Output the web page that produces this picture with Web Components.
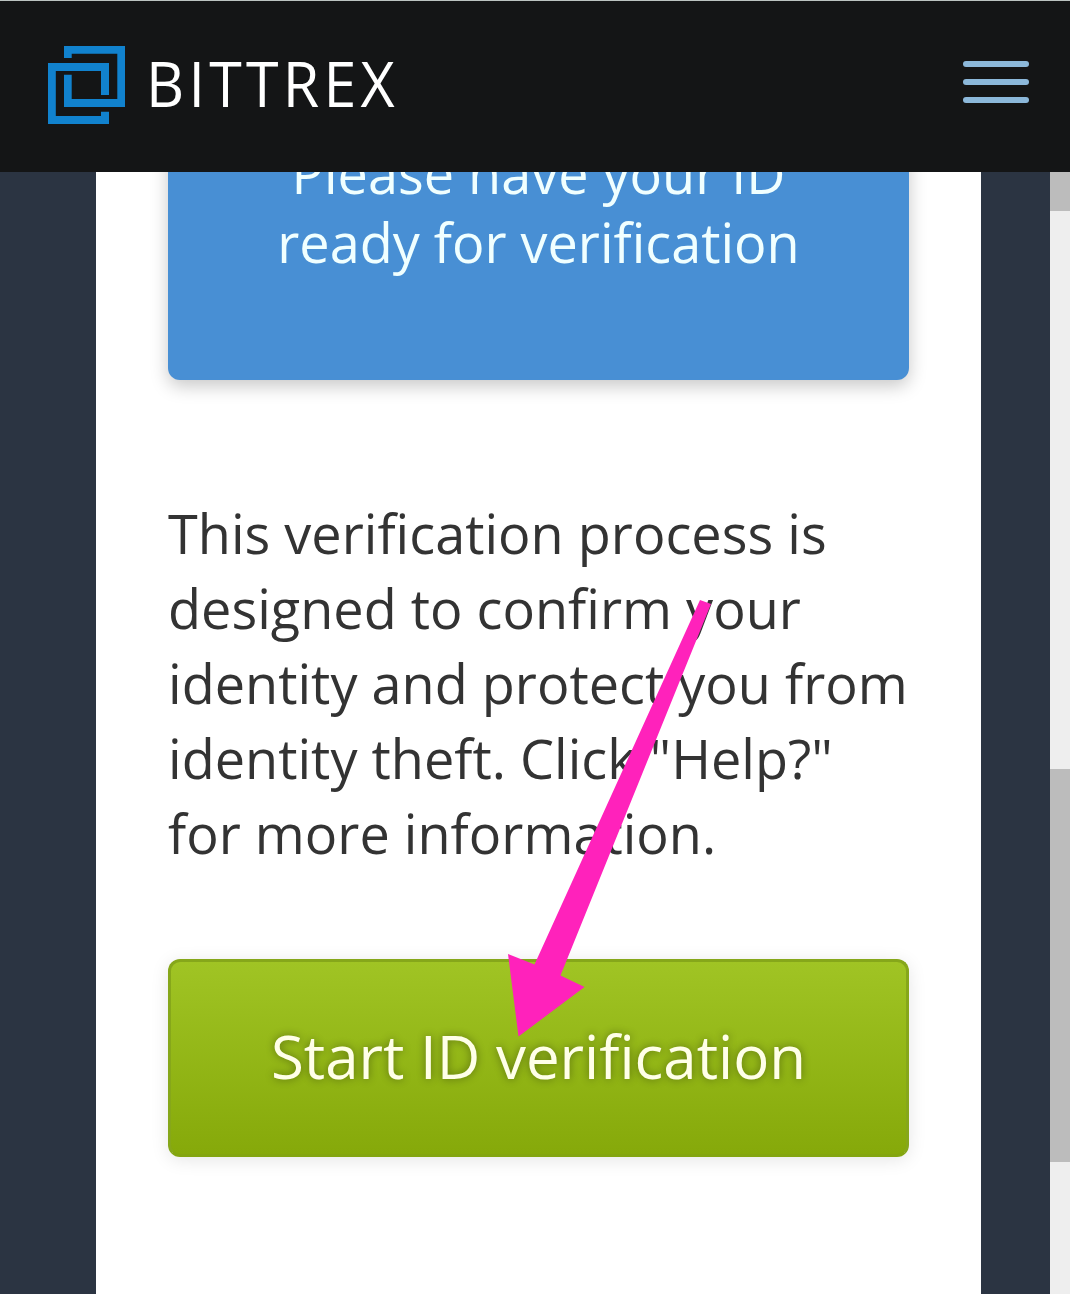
<!DOCTYPE html>
<html lang="en">
<head>
<meta charset="utf-8">
<title>Bittrex - ID verification</title>
<style>
html, body { margin: 0; height: 100%; overflow: hidden; }
body { font-family: "Open Sans", "Noto Sans", sans-serif; background: #2b3442; font-variant-ligatures: none; }
</style>
</head>
<body>
<verify-page>
  <site-header slot="header"><brand-logo>BITTREX</brand-logo><menu-button></menu-button></site-header>
  <notice-card>Please have your ID ready for verification</notice-card>
  <info-text>This verification process is designed to confirm your identity and protect you from identity theft. Click "Help?" for more information.</info-text>
  <action-button>Start ID verification</action-button>
  <scroll-track slot="scroll"></scroll-track>
  <pointer-arrow slot="overlay"></pointer-arrow>
</verify-page>
<script>
const define = (name, html) => customElements.define(name, class extends HTMLElement {
  constructor() {
    super();
    this.attachShadow({ mode: 'open' }).innerHTML = html;
  }
});

define('verify-page', `
<style>
:host { display: flex; flex-direction: column; height: 1294px; width: 1070px; position: relative; overflow: hidden; }
.body { display: flex; flex: 1; min-height: 0; overflow: hidden; background: #2b3442; }
main { margin-left: 96px; width: 885px; box-sizing: border-box; padding: 0 72px; background: #fff; display: flow-root; flex: none; overflow: hidden; }
.gap { flex: 1; }
</style>
<slot name="header"></slot>
<div class="body"><main><slot></slot></main><div class="gap"></div><slot name="scroll"></slot></div>
<slot name="overlay"></slot>`);

define('site-header', `
<style>
:host { display: flex; align-items: center; justify-content: space-between; height: 172px; flex: none; box-sizing: border-box; padding: 0 41px 9px 48px; background: #141516; border-top: 1px solid #bcc3c1; }
</style><slot></slot>`);

define('brand-logo', `
<style>
:host { display: flex; align-items: center; gap: 20px; color: #fff; padding-top: 6px; }
svg { display: block; width: 78px; height: 79px; }
span { display: block; margin-top: -4px; font: 400 62.5px/78px "Open Sans", sans-serif; letter-spacing: 4.5px; transform: scaleX(.945); transform-origin: 0 50%; }
</style>
<svg viewBox="48 46 78 79" fill="#1182ce">
<path d="M64 46H125V107H64V74.7H71.7V99H117.3V53.7H71.7V58H64Z"/>
<path d="M48 63H109V95H101V71H55.8V116H101V111.7H109V124H48Z"/>
</svg><span><slot></slot></span>`);

define('menu-button', `
<style>
:host { display: flex; flex-direction: column; gap: 12px; width: 66px; }
i { height: 6px; border-radius: 3px; background: #8cb8da; }
</style><i></i><i></i><i></i>`);

define('notice-card', `
<style>
:host { display: block; box-sizing: border-box; height: 268px; margin-top: -60px; padding: 27px 90px 0; border-radius: 12px; background: #488fd4; color: #f0ffff; text-align: center; font-size: 54px; line-height: 69px; box-shadow: 0 6px 18px rgba(0,0,0,.22); }
</style><slot></slot>`);

define('info-text', `
<style>
:host { display: block; margin-top: 116px; font-size: 54px; line-height: 75px; letter-spacing: .02px; color: #333; }
</style><slot></slot>`);

define('action-button', `
<style>
:host { display: flex; align-items: center; justify-content: center; box-sizing: border-box; height: 198px; padding-bottom: 4px; margin-top: 88px; border: 3px solid #86a71a; border-bottom-color: #83a50f; border-radius: 12px; background: linear-gradient(#a0c424, #86a90a); color: #ffffe8; font-size: 60px; line-height: 82px; text-shadow: 0 0 9px rgba(0,0,0,.4); box-shadow: 0 3px 18px rgba(0,0,0,.1); }
</style><slot></slot>`);

define('scroll-track', `
<style>
:host { display: flex; flex-direction: column; width: 20px; background: #eee; }
.top { height: 39px; background: #bcbcbc; }
.thumb { height: 393px; margin-top: 558px; background: #bcbcbc; }
</style><div class="top"></div><div class="thumb"></div>`);

define('pointer-arrow', `
<style>
:host { position: absolute; left: 508px; top: 600px; width: 204px; height: 437px; pointer-events: none; }
svg { display: block; width: 100%; height: 100%; }
</style>
<svg viewBox="508 600 204 437"><path fill="#ff22bb" d="M700 600L711 604L560.5 975.5L584.5 987L518.5 1036.5L508 954L534.5 964.5Z"/></svg>`);
</script>
</body>
</html>
